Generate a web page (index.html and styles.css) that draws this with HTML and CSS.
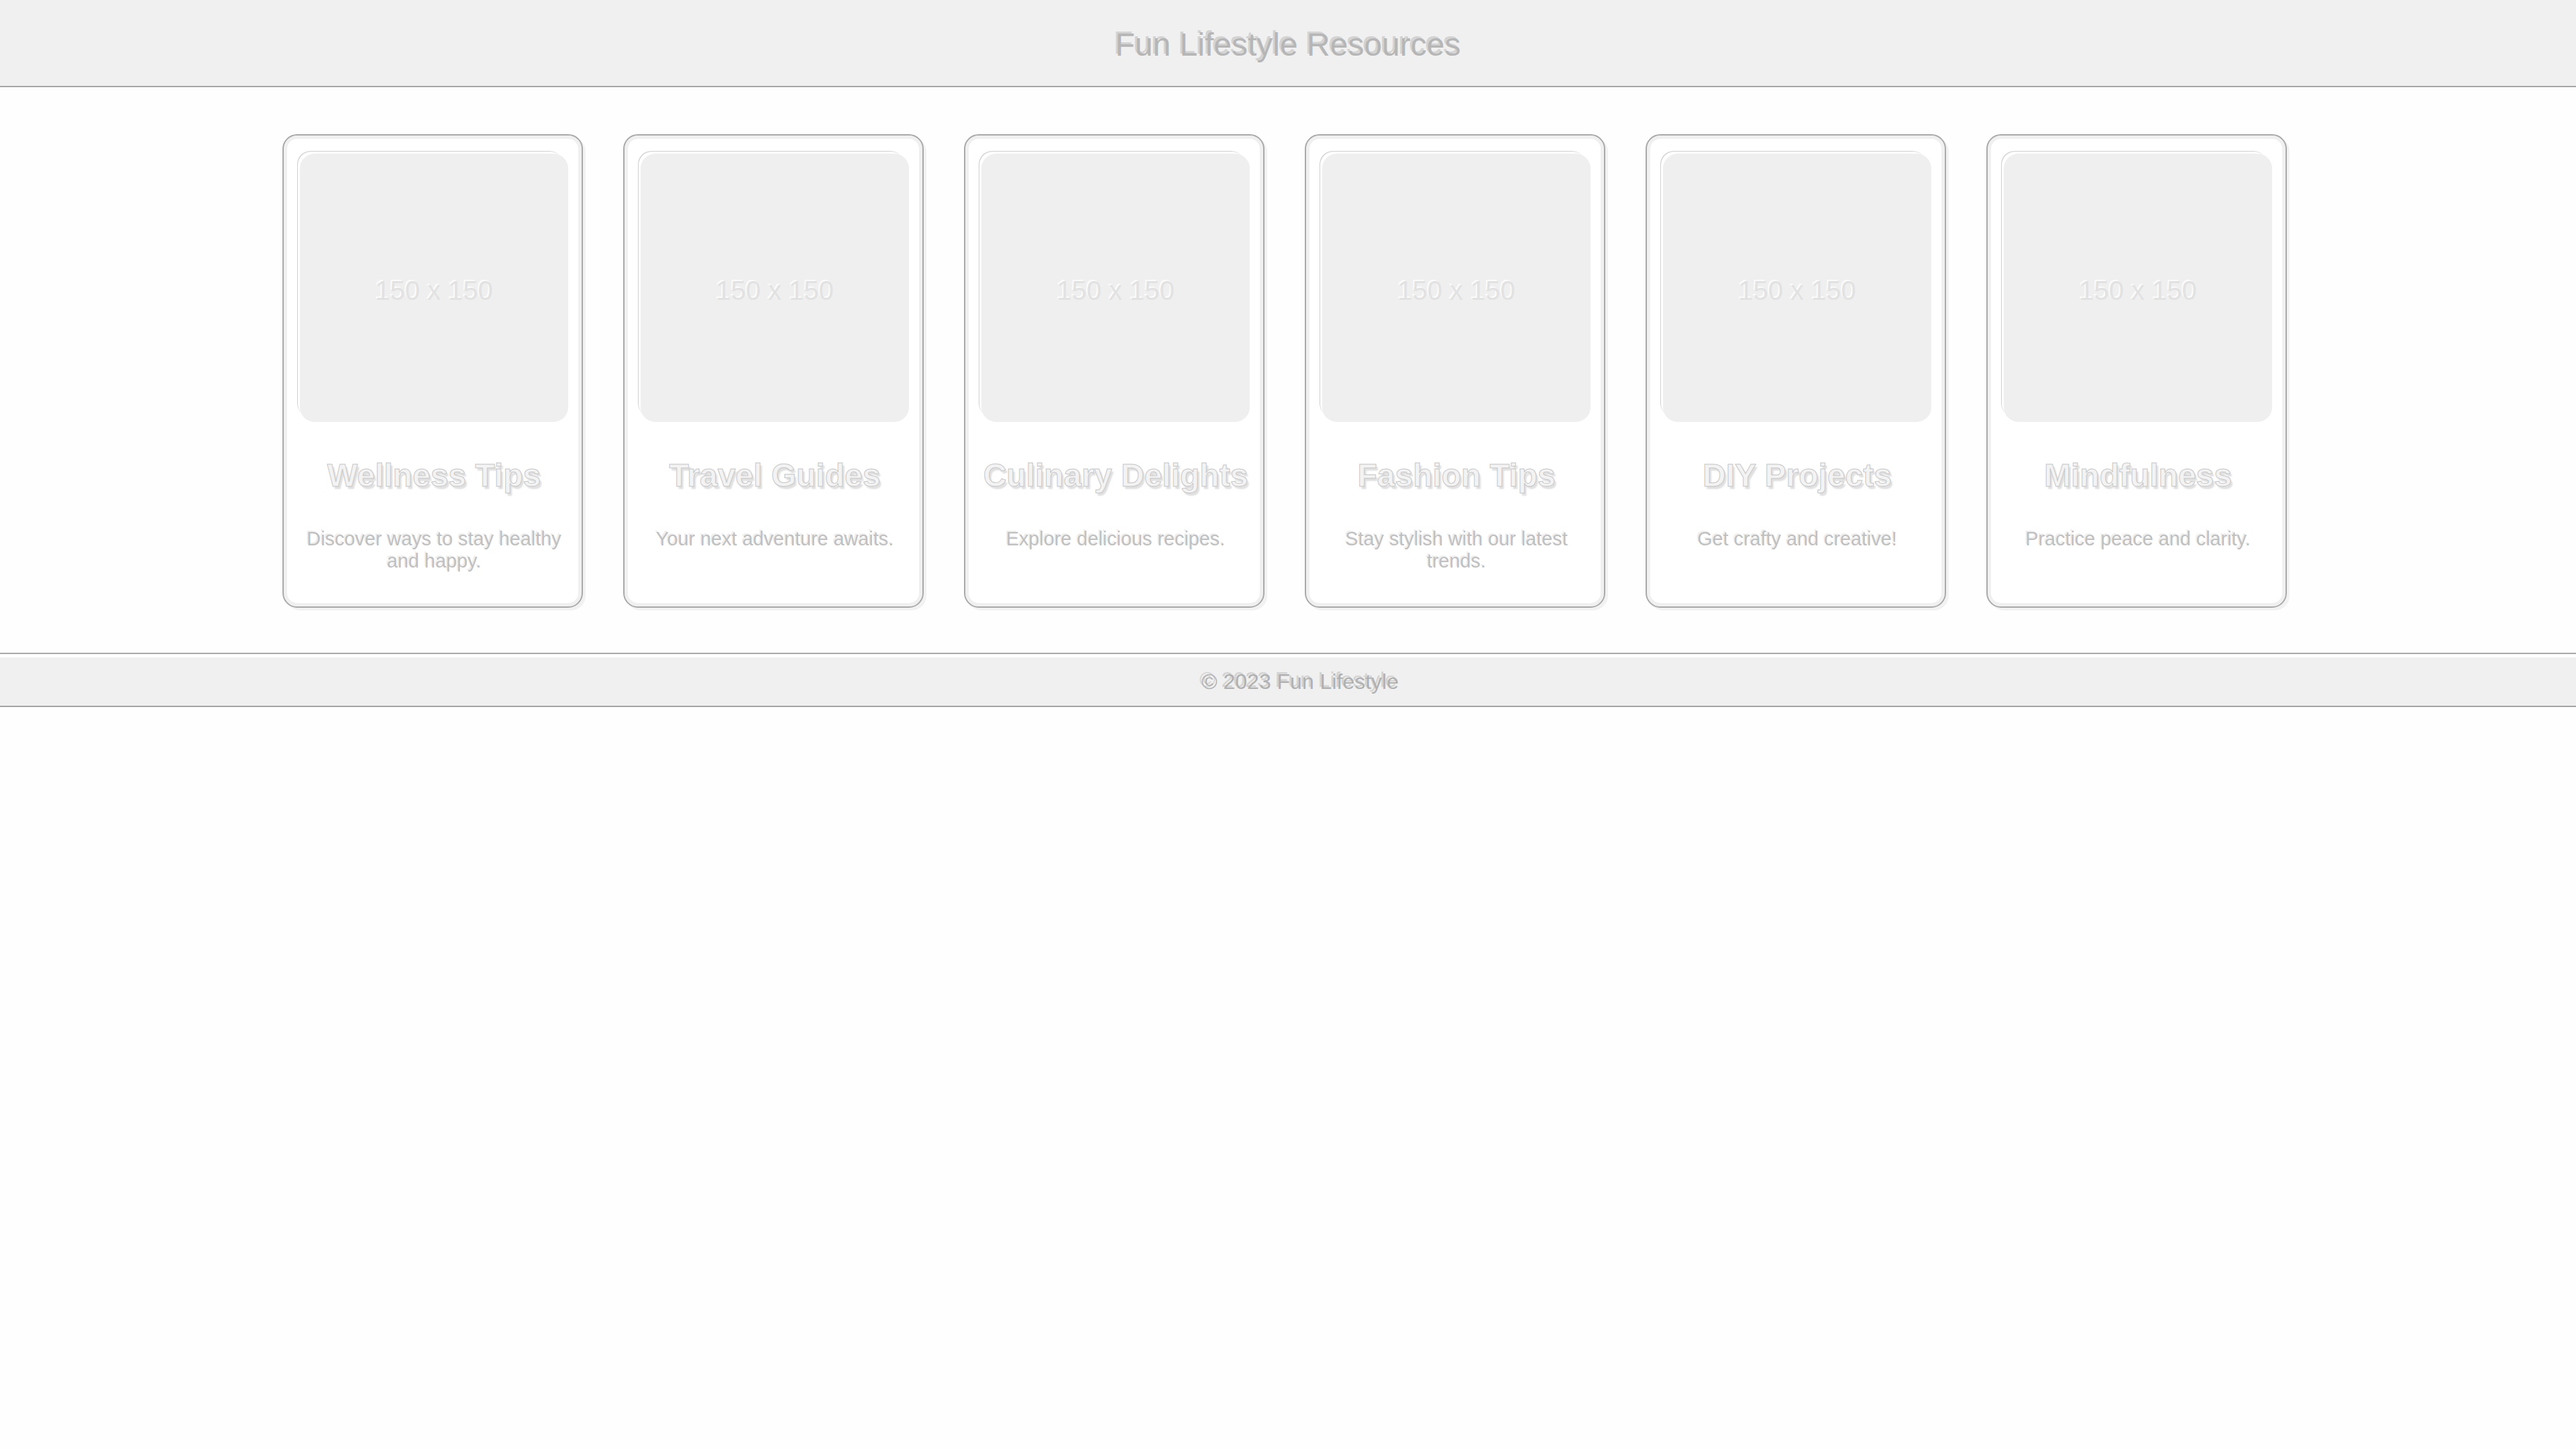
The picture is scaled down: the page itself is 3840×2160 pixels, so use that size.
FILE: index.html
```html
<!DOCTYPE html>
<html lang="en">
<head>
<meta charset="utf-8">
<title>Fun Lifestyle Resources</title>
<link rel="stylesheet" href="styles.css">
</head>
<body>
<header class="site-header">
  <h1 class="site-title">Fun Lifestyle Resources</h1>
</header>
<main class="cards">
  <article class="card">
    <div class="thumb"><span class="thumb-label">150 x 150</span></div>
    <h2 class="card-title">Wellness Tips</h2>
    <p class="card-text">Discover ways to stay healthy and happy.</p>
  </article>
  <article class="card">
    <div class="thumb"><span class="thumb-label">150 x 150</span></div>
    <h2 class="card-title">Travel Guides</h2>
    <p class="card-text">Your next adventure awaits.</p>
  </article>
  <article class="card">
    <div class="thumb"><span class="thumb-label">150 x 150</span></div>
    <h2 class="card-title">Culinary Delights</h2>
    <p class="card-text">Explore delicious recipes.</p>
  </article>
  <article class="card">
    <div class="thumb"><span class="thumb-label">150 x 150</span></div>
    <h2 class="card-title">Fashion Tips</h2>
    <p class="card-text">Stay stylish with our latest trends.</p>
  </article>
  <article class="card">
    <div class="thumb"><span class="thumb-label">150 x 150</span></div>
    <h2 class="card-title">DIY Projects</h2>
    <p class="card-text">Get crafty and creative!</p>
  </article>
  <article class="card">
    <div class="thumb"><span class="thumb-label">150 x 150</span></div>
    <h2 class="card-title">Mindfulness</h2>
    <p class="card-text">Practice peace and clarity.</p>
  </article>
</main>
<footer class="site-footer">
  <div class="footer-bar">&copy; 2023 Fun Lifestyle</div>
</footer>
</body>
</html>
```

FILE: styles.css
```css
html, body {
  margin: 0;
  padding: 0;
  background: #fefefe;
  font-family: "Liberation Sans", Arial, sans-serif;
}

.site-header {
  background: #f0f0f0;
  height: 128px;
  border-bottom: 2px solid #a6a6a6;
  display: flex;
  align-items: center;
  justify-content: center;
}

.site-title {
  margin: 0;
  font-size: 48px;
  font-weight: normal;
  color: #b6b6b6;
  text-shadow: -3px -3px 0 rgba(140, 140, 140, 0.3);
  line-height: 1;
  padding-top: 6px;
}

.cards {
  display: flex;
  justify-content: center;
  align-items: stretch;
  gap: 60px;
  padding: 70px 10px 67px 0;
}

.card {
  width: 400px;
  padding: 27px 20px 51px 24px;
  border: 2px solid #a9a9a9;
  border-radius: 22px;
  background: #ffffff;
  box-shadow: inset 0 0 0 5px #f0f0f0, 4px 4px 0 #f2f2f2;
  text-align: center;
}

.thumb {
  width: 400px;
  height: 400px;
  border-radius: 22px;
  background: #efefef;
  box-shadow: -5px -5px 0 -2px #ffffff, -6px -6px 0 -2px #d0d0d0;
  display: flex;
  align-items: center;
  justify-content: center;
}

.thumb-label {
  font-size: 40px;
  color: #e2e2e2;
  padding-top: 8px;
  text-shadow: -2px -2px 0 rgba(255, 255, 255, 0.8);
}

.card-title {
  margin: 52px 0 0;
  font-size: 48px;
  font-weight: bold;
  line-height: 55px;
  color: #f3f3f3;
  -webkit-text-stroke: 1px #c8c8c8;
  text-shadow: 3px 4px 2px #e0e0e0;
}

.card-text {
  margin: 51px 0 0;
  font-size: 28.8px;
  line-height: 33px;
  color: #c0c0c0;
  text-shadow: -2px -2px 0 rgba(170, 170, 170, 0.2);
}

.site-footer {
  border-top: 2px solid #a9a9a9;
  padding-top: 5px;
}

.footer-bar {
  background: #f0f0f0;
  border-bottom: 2px solid #a3a3a3;
  box-shadow: 0 4px 0 #f6f6f6;
  height: 72px;
  display: flex;
  align-items: center;
  justify-content: center;
  padding-left: 36px;
  font-size: 32px;
  color: #b0b0b0;
  text-shadow: -3px -3px 0 rgba(140, 140, 140, 0.3);
}
```
